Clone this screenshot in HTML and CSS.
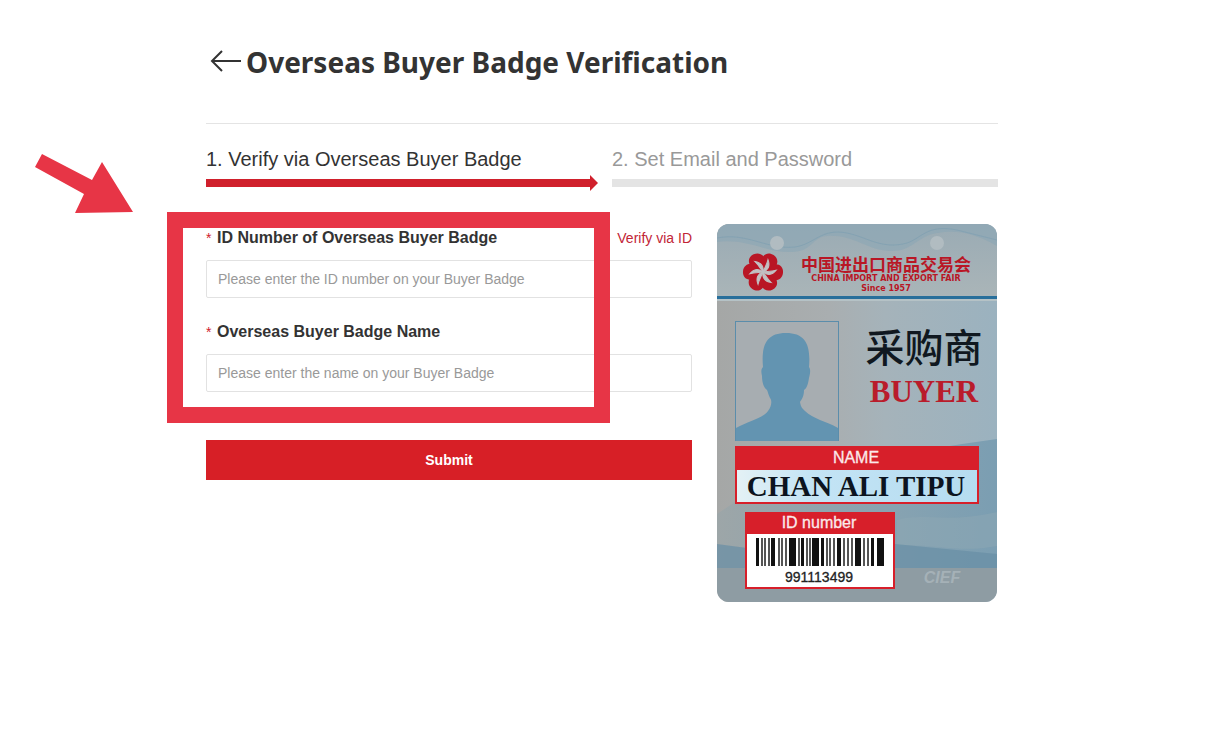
FILE: index.html
```html
<!DOCTYPE html>
<html lang="en">

<head>
  <meta charset="UTF-8">
  <meta name="viewport" content="width=device-width, initial-scale=1">
  <title>Overseas Buyer Badge Verification</title>
  <link rel="stylesheet" href="styles.css">
</head>

<body>
  <main class="page">
    <svg class="pointer" viewBox="0 0 98 60" aria-hidden="true">
      <path d="M7 0 L57 26 L67 8 L98 58 L40 59 L49 40 L0 13 Z" />
    </svg>

    <header class="page-header">
      <a class="back" href="#" aria-label="Back">
        <svg viewBox="0 0 32 26" aria-hidden="true">
          <path d="M12 2 L2 12 L12 22 M2 12 H31" />
        </svg>
      </a>
      <h1>Overseas Buyer Badge Verification</h1>
    </header>

    <ol class="steps">
      <li class="step step-active">1. Verify via Overseas Buyer Badge</li>
      <li class="step">2. Set Email and Password</li>
    </ol>

    <div class="content">
      <form class="form">
        <div class="field">
          <div class="field-head">
            <label for="badge-id"><span class="required">*</span>ID Number of Overseas Buyer Badge</label>
            <a class="link" href="#">Verify via ID</a>
          </div>
          <input id="badge-id" type="text" placeholder="Please enter the ID number on your Buyer Badge">
        </div>
        <div class="field">
          <div class="field-head">
            <label for="badge-name"><span class="required">*</span>Overseas Buyer Badge Name</label>
          </div>
          <input id="badge-name" type="text" placeholder="Please enter the name on your Buyer Badge">
        </div>
        <button class="submit" type="submit">Submit</button>
        <div class="highlight"></div>
      </form>

      <svg class="badge" viewBox="0 0 280 378" role="img" aria-label="Buyer badge">
        <defs>
          <clipPath id="card"><rect width="280" height="378" rx="12" /></clipPath>
          <linearGradient id="card-bg" x1="0" y1="0" x2="1" y2="0">
            <stop offset="0" stop-color="#a5a7a6" />
            <stop offset="0.4" stop-color="#a9aeb0" />
            <stop offset="0.6" stop-color="#a5b3ba" />
            <stop offset="1" stop-color="#9bb2bf" />
          </linearGradient>
          <linearGradient id="top-bg" x1="0" y1="0" x2="0" y2="1">
            <stop offset="0" stop-color="#9aabb4" />
            <stop offset="1" stop-color="#aab5b8" />
          </linearGradient>
          <linearGradient id="lower-bg" x1="0" y1="0" x2="1" y2="0">
            <stop offset="0" stop-color="#9da6a8" />
            <stop offset="0.6" stop-color="#88a3b1" />
            <stop offset="1" stop-color="#7b9eb2" />
          </linearGradient>
          <linearGradient id="name-bg" x1="0" y1="0" x2="1" y2="0">
            <stop offset="0" stop-color="#e4f1f5" />
            <stop offset="0.3" stop-color="#c4e4f5" />
            <stop offset="1" stop-color="#b5dcf0" />
          </linearGradient>
          <path id="petal" d="M-3 -5 C-12 -9 -10 -20 -1 -20 C8 -20 10 -9 3 -5 Z" />
          <path id="swirl" d="M0 0 C3 -4 3 -9 -3 -13 C-1 -8 -1 -4 0 0 Z" />
        </defs>

        <g clip-path="url(#card)">
          <rect width="280" height="378" fill="url(#card-bg)" />
          <rect width="280" height="73" fill="url(#top-bg)" />
          <path d="M0 0 H280 V22 C255 8 240 6 220 9 C200 12 196 28 172 27 C150 26 135 10 110 12 C95 13 95 28 75 28 C50 29 30 14 0 18 Z" fill="#88a5b5" opacity="0.5" />
          <path d="M0 14 C30 8 50 26 78 23 C98 20 104 4 130 9 C150 13 165 26 190 19 C205 14 210 0 240 6 L280 16" fill="none" stroke="#7098b0" opacity="0.4" />
          <rect y="72" width="280" height="3" fill="#286f9b" />
          <rect y="75" width="280" height="2" fill="#b5c2c6" />
          <path d="M0 290 L60 250 L245 220 L280 215 V344 H0 Z" fill="url(#lower-bg)" />
          <path d="M180 296 C205 288 230 300 280 288 V322 C240 330 210 318 180 322 Z" fill="#8ea8b4" opacity="0.5" />
          <path d="M0 320 L30 324 L178 320 L280 330 V344 H0 Z" fill="#688fa5" opacity="0.7" />
          <rect y="344" width="280" height="34" fill="#8e9ca3" />
          <circle cx="60" cy="19" r="7" fill="#b1bcc1" />
          <circle cx="220" cy="19" r="7" fill="#b1bcc1" />
        </g>

        <g transform="translate(46 48)">
          <g fill="#b91625">
            <use href="#petal" transform="rotate(-25)" />
            <use href="#petal" transform="rotate(35)" />
            <use href="#petal" transform="rotate(95)" />
            <use href="#petal" transform="rotate(155)" />
            <use href="#petal" transform="rotate(215)" />
            <use href="#petal" transform="rotate(275)" />
            <circle r="8" />
          </g>
          <g fill="#c2c1c3" stroke="#c2c1c3">
            <use href="#swirl" transform="rotate(-25)" />
            <use href="#swirl" transform="rotate(35)" />
            <use href="#swirl" transform="rotate(95)" />
            <use href="#swirl" transform="rotate(155)" />
            <use href="#swirl" transform="rotate(215)" />
            <use href="#swirl" transform="rotate(275)" />
          </g>
        </g>
        <text class="fair-cn" x="169" y="47">中国进出口商品交易会</text>
        <text class="fair-en" x="169" y="57">CHINA IMPORT AND EXPORT FAIR</text>
        <text class="fair-en" x="169" y="67">Since 1957</text>

        <rect x="18.5" y="97.5" width="103" height="119" fill="#a7adb1" stroke="#5b8dab" />
        <path d="M19 217 V204 C32 197 46 194 51 187 C55 182 55 176 53 174 C51 170 51 168 50 166 C46 163 45 157 45 152 C44 148 44 145 46 143 C44 120 50 109 69 109 C88 109 94 120 92 143 C94 146 93 150 92 154 C91 160 90 164 87 166 C87 172 85 175 83 178 C84 184 86 185 88 187 C96 195 109 197 121 204 V217 Z" fill="#6394b1" />
        <text class="buyer-cn" x="207" y="138">采购商</text>
        <text class="buyer-en" x="207" y="178">BUYER</text>

        <rect x="18" y="222" width="244" height="58" fill="#d71f2a" />
        <rect x="20" y="246" width="240" height="32" fill="url(#name-bg)" />
        <text class="tag" x="139" y="239">NAME</text>
        <text class="name" x="139" y="272">CHAN ALI TIPU</text>

        <rect x="28" y="288" width="150" height="77" fill="#d71f2a" />
        <rect x="30" y="310" width="146" height="53" fill="#fff" />
        <text class="tag" x="102" y="304">ID number</text>
        <path fill="#111" d="M39 314h3v28h-3zM54 314h4v28h-4zM72 314h7v28h-7zM84 314h3v28h-3zM95 314h7v28h-7zM104 314h3v28h-3zM120 314h4v28h-4zM138 314h6v28h-6zM154 314h3v28h-3zM160 314h7v28h-7z" />
        <path fill="#555" d="M44 314h2v28h-2zM47 314h2v28h-2zM51 314h2v28h-2zM61 314h2v28h-2zM64 314h2v28h-2zM68 314h2v28h-2zM81 314h2v28h-2zM89 314h2v28h-2zM92 314h2v28h-2zM109 314h2v28h-2zM112 314h2v28h-2zM116 314h2v28h-2zM126 314h2v28h-2zM130 314h2v28h-2zM134 314h2v28h-2zM146 314h2v28h-2zM150 314h2v28h-2z" />
        <text class="number" x="102" y="358">991113499</text>
        <text class="mark" x="225" y="359">CIEF</text>
      </svg>
    </div>
  </main>
</body>

</html>
```
FILE: styles.css
```css
* {
  box-sizing: border-box;
}

body {
  margin: 0;
  padding: 0 20px 0 16px;
  background: #fff;
  color: #333;
  font-family: "Liberation Sans", Arial, sans-serif;
}

.page {
  position: relative;
  max-width: 792px;
  margin: 0 auto;
}

.page-header {
  display: flex;
  align-items: center;
  gap: 4px;
  height: 124px;
  padding-left: 4px;
  border-bottom: 1px solid #e4e4e4;
}

.page-header h1 {
  margin: 0;
  font: bold 28px/40px "Noto Sans", "Open Sans", sans-serif;
}

.back svg {
  display: block;
  width: 32px;
  height: 26px;
  fill: none;
  stroke: #333;
  stroke-width: 2;
}

.steps {
  display: grid;
  grid-template-columns: 1fr 1fr;
  gap: 20px;
  margin: 0;
  padding: 20px 0 0;
  list-style: none;
}

.step {
  position: relative;
  padding-bottom: 5px;
  border-bottom: 8px solid #e4e4e4;
  color: #999;
  font-size: 20px;
  line-height: 30px;
}

.step-active {
  border-color: #d0202c;
  color: #333;
}

.step-active::after {
  content: "";
  position: absolute;
  right: -6px;
  bottom: -12px;
  border: 8px solid transparent;
  border-right: 0;
  border-left-color: #d0202c;
}

.content {
  display: flex;
  flex-wrap: wrap;
  align-items: flex-start;
  gap: 25px;
  padding: 37px 1px 0 0;
}

.form {
  position: relative;
  flex: 1;
}

.field {
  margin-bottom: 20px;
}

.field-head {
  display: flex;
  justify-content: space-between;
  margin-bottom: 8px;
  line-height: 28px;
}

.field label {
  font-size: 16px;
  font-weight: bold;
}

.required {
  display: inline-block;
  width: 11px;
  color: #d0202c;
  font-size: 14px;
  font-weight: normal;
}

.link {
  color: #c22536;
  font-size: 14px;
  text-decoration: none;
}

.field input {
  display: block;
  width: 100%;
  height: 38px;
  padding: 0 11px;
  border: 1px solid #e2e2e2;
  border-radius: 2px;
  font: 14px "Liberation Sans", Arial, sans-serif;
}

.field input::placeholder {
  color: #999;
}

.submit {
  display: block;
  width: 100%;
  height: 40px;
  margin-top: 48px;
  border: 0;
  background: #d71f26;
  color: #fff;
  font: bold 14px "Liberation Sans", Arial, sans-serif;
  cursor: pointer;
}

/* annotations drawn over the form */
.highlight {
  position: absolute;
  top: -12px;
  left: -39px;
  right: 82px;
  height: 211px;
  border: 16px solid #e73546;
  pointer-events: none;
}

.pointer {
  position: absolute;
  top: 154px;
  left: -171px;
  width: 98px;
  height: 60px;
  fill: #e73546;
}

.badge {
  width: 280px;
  height: 378px;
}

.badge text {
  text-anchor: middle;
}

.fair-cn {
  fill: #b91625;
  font: bold 17px "Noto Sans CJK SC", sans-serif;
}

.fair-en {
  fill: #b91625;
  font: bold 8px "DejaVu Sans", sans-serif;
}

.buyer-cn {
  fill: #101820;
  font: 500 39px "Noto Sans CJK SC", sans-serif;
}

.buyer-en {
  fill: #b91c2b;
  font: bold 31px "Liberation Serif", serif;
}

.badge .tag {
  fill: #fbe9ea;
  stroke: #fbe9ea;
  stroke-width: 0.3px;
  font: 16px "Liberation Sans", Arial, sans-serif;
}

.badge .name {
  fill: #0c1420;
  font: bold 29px "Liberation Serif", serif;
}

.badge .number {
  fill: #222;
  stroke: #222;
  stroke-width: 0.3px;
  font: 14px "Liberation Sans", Arial, sans-serif;
}

.badge .mark {
  fill: #a5b1b7;
  font: italic bold 16px "Liberation Sans", Arial, sans-serif;
}

@media (max-width: 768px) {
  .form {
    flex-basis: 100%;
  }
}
```
